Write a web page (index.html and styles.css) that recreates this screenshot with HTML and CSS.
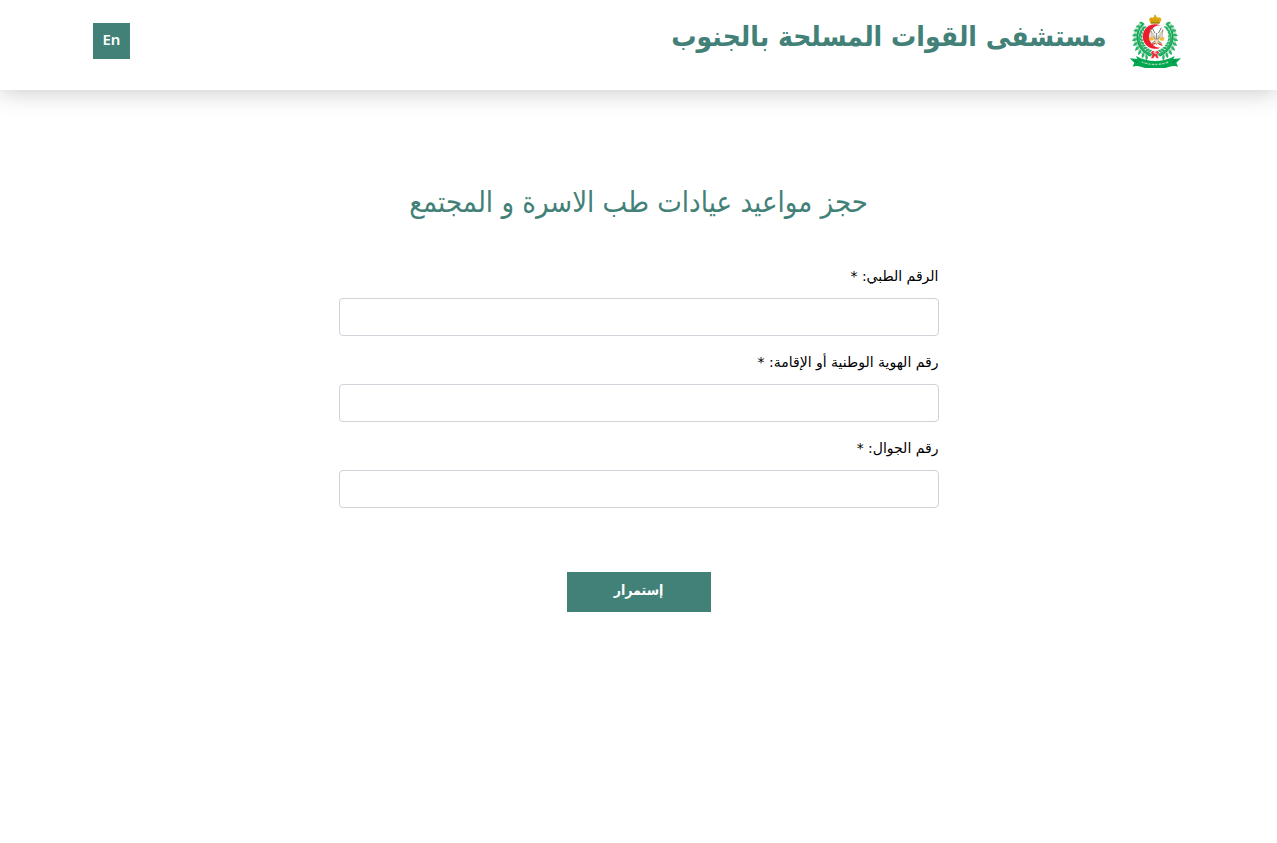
FILE: index.html
```html
<!DOCTYPE html>
<html lang="ar" dir="rtl">
<head>
  <meta charset="UTF-8">
  <meta name="viewport" content="width=device-width, initial-scale=1.0">
  <title>حجز المواعيد</title>
  <link rel="stylesheet" href="styles.css">
</head>
<body>

  <header class="header">
    <div class="header-container">
      <div class="brand">
        <svg class="logo" viewBox="24 21 162 168" aria-hidden="true">
          <defs>
            <g id="leaf">
              <path d="M105 49c-9-4-9-11-8-16 7 3 10 8 8 16z"/>
              <path d="M105 55c-6 5-13 5-17 2 4-6 10-7 17-2z"/>
              <path d="M105 54c-7 4-10 10-7 15 6-2 9-7 7-15z"/>
            </g>
            <g id="branch">
              <path d="M68 56C39 82 41 124 83 150" fill="none" stroke="#b5e3c8" stroke-width="18"/>
              <path d="M70 57C43 82 45 122 83 148l9 5" fill="none" stroke="#0aa653" stroke-width="5"/>
              <use href="#leaf" transform="rotate(-36 105 102)"/>
              <use href="#leaf" transform="rotate(-49 105 102)"/>
              <use href="#leaf" transform="rotate(-62 105 102)"/>
              <use href="#leaf" transform="rotate(-75 105 102)"/>
              <use href="#leaf" transform="rotate(-88 105 102)"/>
              <use href="#leaf" transform="rotate(-101 105 102)"/>
              <use href="#leaf" transform="rotate(-114 105 102)"/>
              <use href="#leaf" transform="rotate(-127 105 102)"/>
              <use href="#leaf" transform="rotate(-140 105 102)"/>
              <use href="#leaf" transform="rotate(-152 105 102)"/>
            </g>
          </defs>
          <g fill="#2bb168">
            <use href="#branch"/>
            <use href="#branch" transform="translate(210 0) scale(-1 1)"/>
          </g>
          <!-- crescent and crossed swords -->
          <circle cx="106" cy="95" r="39" fill="#fff"/>
          <path d="M121 61a37 37 0 1 0 0 67 31 31 0 1 1 0-67z" fill="#ed1c2e"/>
          <path d="M91 74c4 19 14 31 34 42M129 74c-4 19-14 31-34 42" fill="none" stroke="#a79779" stroke-width="4"/>
          <path d="M94 79l13 16-15 4zM126 79l-13 16 15 4z" fill="#d8d2bf" stroke="#8b8a78"/>
          <path d="M110 84v34M96 68l9 17M124 68l-9 17" fill="none" stroke="#777" stroke-width="3"/>
          <path d="M86 98l13-3 3 10-13 3zM119 99l15-2-4 11-11-2z" fill="#f5b93a"/>
          <path d="M102 103h15l-7 17z" fill="#e9dfbd" stroke="#a88d48"/>
          <path d="M94 119l13-4M114 115l13 6" stroke="#e33b39" stroke-width="4"/>
          <!-- crown -->
          <path d="M92 54c-9-12-3-18 6-16 2-5 14-5 16 0 10-2 14 5 5 16z" fill="#e4ae12"/>
          <path d="M103 33l2-5 3 5-3 4zM92 50h27v6H92z" fill="#a88210"/>
          <path d="M98 49l-4-8M105 49v-9M112 49l4-8" stroke="#9b7813" stroke-width="2"/>
          <!-- ribbon -->
          <path d="M29 160l23 2-4-9c35 20 80 20 116 0l-4 9 23-2-14 13 5 12c-9-4-18-2-28 1-27 9-54 9-81 0-9-3-18-5-27-1l5-12z" fill="#02a750"/>
          <path d="M45 166l6 8M165 166l-6 8" stroke="#087c3d" stroke-width="3"/>
          <path d="M65 171q40 15 81 0" fill="none" stroke="#a5dcbc" stroke-width="4" stroke-dasharray="5 2 2 2 7 3"/>
          <path d="M98 137l7 4 8-4 5 7-7 4 5 12h-6l-5-8-5 8h-7l5-12-6-4z" fill="#ef2d3c"/>
          <path d="M101 143l9 2" stroke="#fff" stroke-width="3"/>
        </svg>
        <h1 class="hospital-name">مستشفى القوات المسلحة بالجنوب</h1>
      </div>
      <a class="lang-link" href="#" lang="en">En</a>
    </div>
  </header>

  <main class="content">
    <h2 class="title">حجز مواعيد عيادات طب الاسرة و المجتمع</h2>
    <form class="booking-form">
      <div class="form-group">
        <label for="medicalNo">الرقم الطبي: *</label>
        <input type="text" id="medicalNo" required>
      </div>
      <div class="form-group">
        <label for="nationalId">رقم الهوية الوطنية أو الإقامة: *</label>
        <input type="text" id="nationalId" required>
      </div>
      <div class="form-group">
        <label for="mobile">رقم الجوال: *</label>
        <input type="tel" id="mobile" required>
      </div>
      <button class="submit-button" type="submit">إستمرار</button>
    </form>
  </main>

</body>
</html>
```
FILE: styles.css
```css
* {
  box-sizing: border-box;
}
body {
  margin: 0;
  font-family: "DejaVu Sans", sans-serif;
  font-size: 14px;
  line-height: 24px;
  color: #000;
  background-color: #fff;
}
.header {
  padding: 12px 0 20px;
  background-color: #fff;
  box-shadow: 0 0 24px rgba(0, 0, 0, 0.25);
}
.header-container {
  display: flex;
  justify-content: space-between;
  align-items: flex-start;
  max-width: 1140px;
  margin: 0 auto;
  padding: 0 24px;
}
.brand {
  display: flex;
  align-items: flex-start;
  gap: 18px;
}
.logo {
  width: 60px;
  height: 56px;
}
.hospital-name {
  margin: 0;
  font-family: "DejaVu Sans Condensed", "DejaVu Sans", sans-serif;
  font-size: 28px;
  line-height: 50px;
  font-weight: bold;
  color: #428177;
}
.lang-link {
  margin-top: 11px;
  padding: 4px 10px 8px;
  font-family: "Noto Sans", sans-serif;
  font-size: 15px;
  font-weight: 600;
  color: #fff;
  background-color: #428177;
  text-decoration: none;
}
.header-container {
  min-height: 58px;
}
.content {
  max-width: 632px;
  margin: 0 auto;
  padding: 92px 16px 32px;
}
.title {
  margin: 0 0 42px;
  font-family: "DejaVu Sans Condensed", "DejaVu Sans", sans-serif;
  font-size: 29px;
  line-height: 40px;
  font-weight: normal;
  text-align: center;
  color: #428177;
}
.form-group {
  margin-bottom: 14px;
}
.form-group label {
  display: block;
  margin-bottom: 10px;
  line-height: 24px;
}
.form-group input {
  display: block;
  width: 100%;
  height: 38px;
  padding: 6px 12px;
  font: inherit;
  border: 1px solid #ced4da;
  border-radius: 4px;
  background-color: #fff;
}
.submit-button {
  display: block;
  width: 144px;
  height: 40px;
  margin: 64px auto 0;
  padding: 0 0 4px;
  font-family: "DejaVu Sans Condensed", "DejaVu Sans", sans-serif;
  font-size: 14px;
  font-weight: bold;
  color: #fff;
  background-color: #428177;
  border: none;
  cursor: pointer;
}
```
